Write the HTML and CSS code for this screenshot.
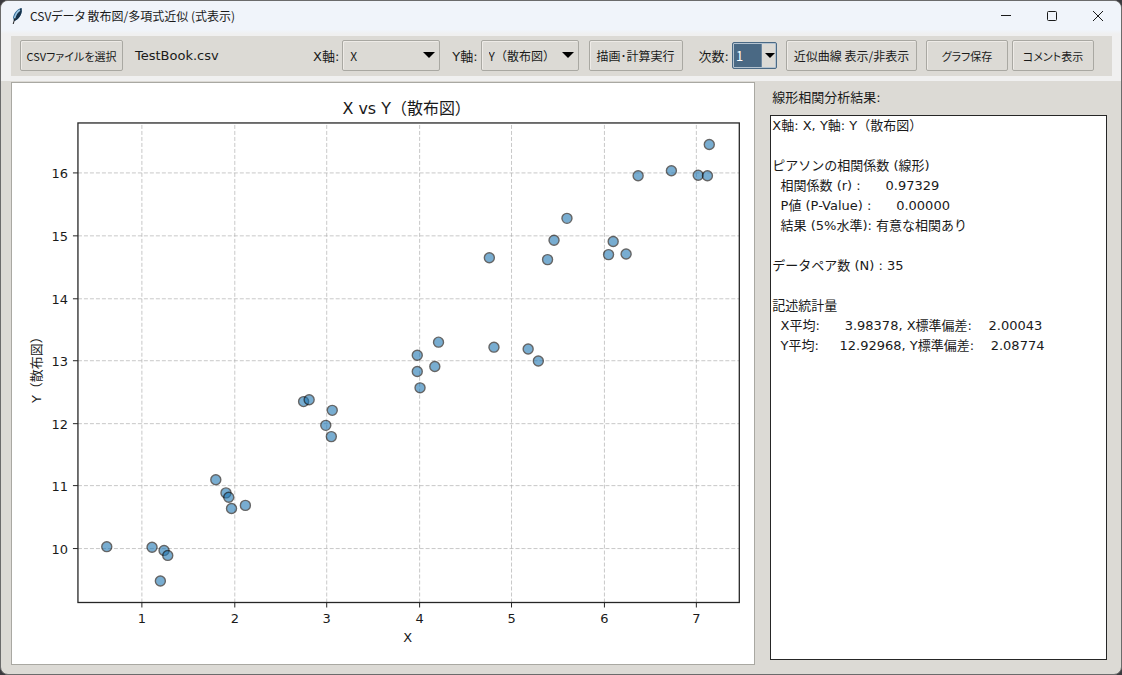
FILE: index.html
```html
<!DOCTYPE html>
<html lang="ja">
<head>
    <meta charset="UTF-8">
    <meta name="viewport" content="width=device-width, initial-scale=1.0">
    <title>CSVデータ 散布図/多項式近似 (式表示)</title>
    <link rel="stylesheet" href="styles.css">
</head>
<body>
    <div class="window">
        <header class="titlebar">
            <svg class="app-icon" viewBox="0 0 12 18" aria-hidden="true">
                <path d="M10.500 1C6 2 2.500 6.500 2 11l1 3c4-1 7-5 7.700-9.500z" fill="#2f6690"/>
                <path d="M10.500 1C7 2.500 5 7 4.200 11.500L3 14c4-1 7-5 7.700-9.500z" fill="#17324a"/>
                <path d="M9 3C5.500 5 4 9 3.200 12.500" stroke="#9cc8e6" stroke-width="1.500" fill="none"/>
                <path d="M4 11L2.200 17" stroke="#222" fill="none"/>
            </svg>
            <h1>CSVデータ 散布図/多項式近似 (式表示)</h1>
            <div class="window-buttons">
                <button type="button" aria-label="最小化">
                    <svg viewBox="0 0 12 12"><path d="M1 5.500h10"/></svg>
                </button>
                <button type="button" aria-label="最大化">
                    <svg viewBox="0 0 12 12"><rect x="1.500" y="1.500" width="9" height="9" rx="1"/></svg>
                </button>
                <button type="button" aria-label="閉じる">
                    <svg viewBox="0 0 12 12"><path d="M1 1l10 10M11 1L1 11"/></svg>
                </button>
            </div>
        </header>

        <div class="toolbar-wrap">
            <div class="toolbar">
                <button type="button" class="btn open-btn">CSVファイルを選択</button>
                <span class="file-name">TestBook.csv</span>

                <label for="x-axis">X軸:</label>
                <div class="combo axis-combo">
                    <select id="x-axis">
                        <option>X</option>
                        <option>Y（散布図）</option>
                    </select>
                </div>

                <label for="y-axis" class="y-label">Y軸:</label>
                <div class="combo axis-combo">
                    <select id="y-axis">
                        <option>X</option>
                        <option selected>Y（散布図）</option>
                    </select>
                </div>

                <button type="button" class="btn run-btn">描画･計算実行</button>

                <label for="degree" class="degree-label">次数:</label>
                <div class="combo degree-combo">
                    <select id="degree">
                        <option>1</option>
                        <option>2</option>
                        <option>3</option>
                    </select>
                </div>

                <button type="button" class="btn curve-btn">近似曲線 表示/非表示</button>
                <button type="button" class="btn save-btn">グラフ保存</button>
                <button type="button" class="btn comment-btn">コメント表示</button>
            </div>
        </div>

        <main class="content">
            <div class="chart">
                <svg id="plot" viewBox="0 0 743 581" role="img" aria-label="X vs Y（散布図）">
                    <g id="grid"></g>
                    <g id="points"></g>
                    <rect class="frame" x="66" y="40" width="662" height="480"/>
                    <g id="ticks"></g>
                    <text class="chart-title" x="395" y="31">X vs Y（散布図）</text>
                    <text class="axis-title" x="396" y="560">X</text>
                    <text class="axis-title" transform="translate(29 284) rotate(-90)">Y（散布図）</text>
                </svg>
            </div>

            <section class="results">
                <label for="result">線形相関分析結果:</label>
                <textarea id="result" readonly spellcheck="false">X軸: X, Y軸: Y（散布図）

ピアソンの相関係数 (線形)
  相関係数 (r) :      0.97329
  P値 (P-Value) :      0.00000
  結果 (5%水準): 有意な相関あり

データペア数 (N) : 35

記述統計量
  X平均:      3.98378, X標準偏差:    2.00043
  Y平均:     12.92968, Y標準偏差:    2.08774</textarea>
            </section>
        </main>
    </div>

    <script src="plot.js"></script>
</body>
</html>
```
FILE: styles.css
```css
* {
    box-sizing: border-box;
}

body {
    margin: 0;
    background: #3a3a3e;
    color: #1a1a1a;
    font-family: "DejaVu Sans", "Noto Sans CJK JP", sans-serif;
    font-size: 13px;
}

.window {
    display: flex;
    flex-direction: column;
    min-height: 100vh;
    background: #dcdad5;
    border: 1px solid #6b6b6b;
    border-radius: 8px;
    overflow: hidden;
}

/* title bar */
.titlebar {
    display: flex;
    align-items: center;
    height: 29px;
    padding-left: 10px;
    background: #f0f4fa;
}

.app-icon {
    width: 12px;
    height: 18px;
}

.titlebar h1 {
    flex: 1;
    margin: 0 0 0 7px;
    font-family: "Noto Sans CJK JP", sans-serif;
    font-size: 12px;
    font-weight: normal;
    font-feature-settings: "palt";
}

.window-buttons {
    display: flex;
}

.window-buttons button {
    display: flex;
    align-items: center;
    justify-content: center;
    width: 46px;
    height: 29px;
    padding: 0;
    border: none;
    background: none;
}

.window-buttons svg {
    width: 12px;
    height: 12px;
    fill: none;
    stroke: #1a1a1a;
}

/* toolbar */
.toolbar-wrap {
    padding: 6px 9px 5px 10px;
    background: linear-gradient(#f0f4fa, #f0f0f0 4px);
}

.toolbar {
    display: flex;
    align-items: center;
    height: 40px;
    padding: 0 18px 1px 9px;
    background: #dcdad5;
    white-space: nowrap;
}

.btn {
    flex: none;
    height: 31px;
    padding: 0;
    border: 1px solid #a9a8a2;
    border-radius: 2px;
    background: #dcdad5;
    box-shadow: inset 1px 1px 0 #eeebe7;
    color: #1a1a1a;
    font-family: "Noto Sans CJK JP", sans-serif;
    font-size: 12px;
    font-feature-settings: "palt";
}

.open-btn,
.save-btn,
.comment-btn {
    font-size: 11px;
}

.open-btn {
    width: 103px;
}

.file-name {
    flex: 1;
    margin-left: 12px;
}

.toolbar label {
    margin-right: 3px;
}

.toolbar .y-label {
    margin-left: 12px;
}

.toolbar .degree-label {
    margin-left: 16px;
}

.run-btn {
    width: 94px;
    margin-left: 10px;
}

.curve-btn {
    width: 131px;
    margin-left: 9px;
}

.save-btn {
    width: 82px;
    margin-left: 9px;
}

.comment-btn {
    width: 82px;
    margin-left: 4px;
}

.combo {
    position: relative;
}

.combo select {
    width: 100%;
    height: 100%;
    border: 1px solid #a9a8a2;
    border-radius: 2px;
    appearance: none;
    background: #dcdad5;
    color: #1a1a1a;
    font-family: "Noto Sans CJK JP", sans-serif;
    font-size: 12px;
}

.combo::after {
    content: "";
    position: absolute;
    top: 12px;
    right: 5px;
    border: 6px solid transparent;
    border-top: 6px solid #000;
    border-bottom: none;
    pointer-events: none;
}

.axis-combo {
    width: 98px;
    height: 31px;
}

.axis-combo select {
    padding: 0 0 0 7px;
    box-shadow: inset 1px 1px 0 #eeebe7;
}

.degree-combo {
    width: 45px;
    height: 27px;
}

.degree-combo select {
    padding: 0 0 0 3px;
    border-color: #4a6984;
    background: linear-gradient(to right, #4a6984 28px, #6f8aa3 28px, #6f8aa3 29px, #dcdad5 29px);
    box-shadow: inset 0 0 0 1px #b4c3d0;
    color: #fff;
    font-size: 13px;
}

.degree-combo::after {
    top: 11px;
    right: 2px;
    border-width: 5px;
    border-bottom-width: 0;
}

/* chart and results */
.content {
    flex: 1;
    display: grid;
    grid-template-columns: 745fr 337fr;
    gap: 15px;
    padding: 1px 14px 9px 10px;
}

.chart {
    border: 1px solid #a9a8a2;
    background: #fff;
}

.chart svg {
    display: block;
    width: 100%;
}

.frame {
    fill: none;
    stroke: #262626;
    stroke-width: 1.3;
}

.grid-line {
    stroke: #b0b0b0;
    stroke-opacity: 0.7;
    stroke-dasharray: 4 2;
}

.tick-line {
    stroke: #262626;
}

.point {
    fill: #1f77b4;
    stroke: #000;
    stroke-width: 1.4;
    opacity: 0.6;
}

#plot text {
    fill: #1a1a1a;
    font-size: 13px;
    text-anchor: middle;
}

#plot .y-tick {
    text-anchor: end;
}

#plot .chart-title {
    font-size: 16px;
}

.results {
    display: flex;
    flex-direction: column;
    padding: 6px 0 5px;
}

.results label {
    margin-left: 2px;
    line-height: 20px;
}

.results textarea {
    flex: 1;
    margin-top: 7px;
    padding: 0 1px;
    border: 1px solid #262626;
    outline: none;
    resize: none;
    background: #fff;
    color: #1a1a1a;
    font-family: inherit;
    font-size: 13px;
    line-height: 20px;
}
```
FILE: plot.js
```js
const SVG_NS = 'http://www.w3.org/2000/svg';

// plot area inside the 743x581 view box
const area = { left: 66, right: 728, top: 40, bottom: 520 };

const data = [
    [0.62, 10.03], [1.11, 10.02], [1.24, 9.97], [1.28, 9.89], [1.20, 9.48],
    [1.80, 11.10], [1.91, 10.89], [1.94, 10.82], [1.97, 10.64], [2.12, 10.69],
    [2.75, 12.35], [2.81, 12.38], [3.06, 12.21], [2.99, 11.97], [3.05, 11.79],
    [3.98, 13.09], [3.98, 12.83], [4.01, 12.57], [4.17, 12.91], [4.21, 13.30],
    [4.81, 13.22], [5.18, 13.19], [5.29, 13.00], [4.76, 14.65], [5.39, 14.62],
    [5.46, 14.93], [5.60, 15.28], [6.05, 14.70], [6.10, 14.91], [6.24, 14.71],
    [6.37, 15.96], [6.73, 16.04], [7.02, 15.97], [7.12, 15.96], [7.14, 16.46]
];

const toX = (v) => 130 + (v - 1) * 92.5;
const toY = (v) => 466 - (v - 10) * 62.6;

function add(parentId, tag, attrs, text) {
    const el = document.createElementNS(SVG_NS, tag);
    for (const key in attrs) {
        el.setAttribute(key, attrs[key]);
    }
    if (text !== undefined) {
        el.textContent = text;
    }
    document.getElementById(parentId).appendChild(el);
}

function line(parentId, cls, x1, y1, x2, y2) {
    add(parentId, 'line', { class: cls, x1, y1, x2, y2 });
}

for (let v = 1; v <= 7; v++) {
    const x = Math.round(toX(v));
    line('grid', 'grid-line', x, area.bottom, x, area.top);
    line('ticks', 'tick-line', x, area.bottom, x, area.bottom + 5);
    add('ticks', 'text', { x, y: area.bottom + 21 }, v);
}

for (let v = 10; v <= 16; v++) {
    const y = Math.round(toY(v));
    line('grid', 'grid-line', area.left, y, area.right, y);
    line('ticks', 'tick-line', area.left - 5, y, area.left, y);
    add('ticks', 'text', { class: 'y-tick', x: area.left - 10, y: y + 5 }, v);
}

data.forEach(([x, y]) => {
    add('points', 'circle', { class: 'point', cx: toX(x), cy: toY(y), r: 5 });
});
```
